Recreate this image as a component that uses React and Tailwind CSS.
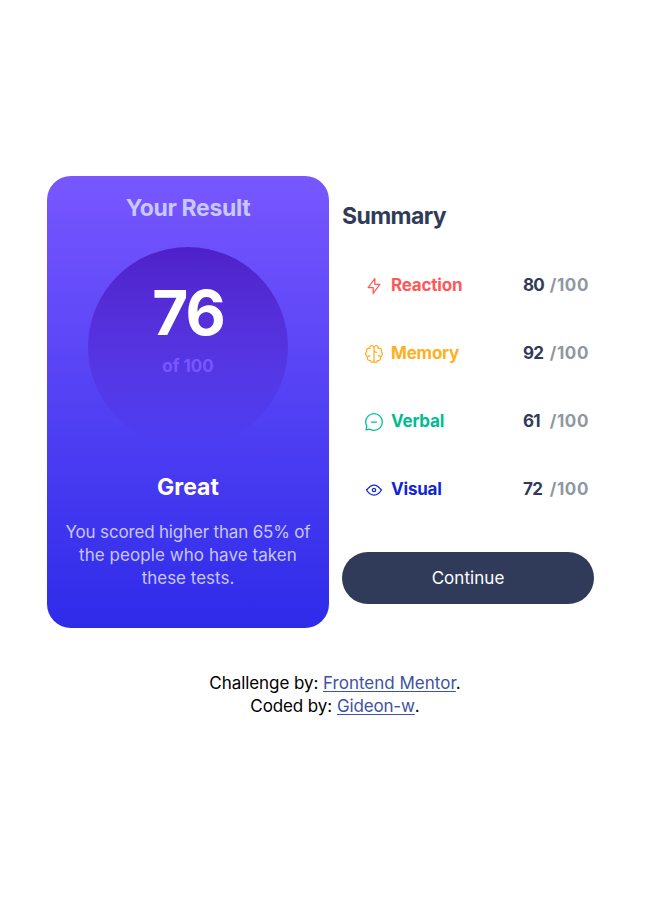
const ICONS = {
  reaction: ['M10.833 8.333V2.5l-6.666 9.167h5V17.5l6.666-9.167h-5Z'],
  memory: [
    'M5.833 11.667a2.5 2.5 0 1 0 .834 4.858',
    'M3.553 13.004a3.333 3.333 0 0 1-.728-5.53m.025-.067a2.083 2.083 0 0 1 2.983-2.824m.199.054A2.083 2.083 0 1 1 10 3.75v12.917a1.667 1.667 0 0 1-3.333 0M10 5.833a2.5 2.5 0 0 0 2.5 2.5m1.667 3.334a2.5 2.5 0 1 1-.834 4.858',
    'M16.447 13.004a3.334 3.334 0 0 0 .728-5.53m-.025-.067a2.083 2.083 0 0 0-2.983-2.824M10 3.75a2.085 2.085 0 0 1 2.538-2.033 2.084 2.084 0 0 1 1.43 2.92m-.635 12.03a1.667 1.667 0 0 1-3.333 0',
  ],
  verbal: [
    'M7.5 10h5',
    'M10 18.333A8.333 8.333 0 1 0 1.667 10c0 1.518.406 2.942 1.115 4.167l-.699 3.75 3.75-.699A8.295 8.295 0 0 0 10 18.333Z',
  ],
  visual: [
    'M10 11.667a1.667 1.667 0 1 0 0-3.334 1.667 1.667 0 0 0 0 3.334Z',
    'M17.5 10c-1.574 2.492-4.402 5-7.5 5s-5.926-2.508-7.5-5C4.416 7.632 6.66 5 10 5s5.584 2.632 7.5 5Z',
  ],
};

const ROWS = [
  { icon: 'reaction', label: 'Reaction', score: 80, color: 'text-[#ff5757]' },
  { icon: 'memory', label: 'Memory', score: 92, color: 'text-[#ffb01f]' },
  { icon: 'verbal', label: 'Verbal', score: 61, color: 'text-[#00bd91]' },
  { icon: 'visual', label: 'Visual', score: 72, color: 'text-[#1125d4]' },
];

function Icon({ name }) {
  return (
    <svg className="size-5 shrink-0" viewBox="0 0 20 20" fill="none" stroke="currentColor" strokeWidth="1.25" strokeLinecap="round" strokeLinejoin="round">
      {ICONS[name].map((d) => (
        <path key={d} d={d} />
      ))}
    </svg>
  );
}

function Result() {
  return (
    <section className="flex h-[452px] w-[282px] flex-col items-center rounded-3xl bg-linear-to-b/srgb from-[#7857ff] to-[#2e2be9] text-center text-[#c8c7ff]">
      <h1 className="mt-4 text-[23px] leading-8 font-bold tracking-[-0.35px]">Your Result</h1>
      <div className="mt-[23px] flex size-[200px] flex-col items-center rounded-full bg-linear-to-b/srgb from-[#4d21c9] to-[#2521c900]">
        <span className="mt-[25px] text-[62px] leading-[82px] font-bold tracking-[-2px] text-white">76</span>
        <span className="text-[17px] leading-6 font-bold text-[#7857ff]">of 100</span>
      </div>
      <h2 className="mt-6 text-[23px] leading-8 font-bold text-white">Great</h2>
      <p className="mt-[18px] text-[17px] leading-[23px] whitespace-nowrap">
        <span className="tracking-[-0.17px]">You scored higher than 65% of</span>
        <br />
        <span className="tracking-[0.06px]">the people who have taken</span>
        <br />
        these tests.
      </p>
    </section>
  );
}

function Summary() {
  return (
    <section className="mt-6 w-[252px] text-[#303b5a]">
      <h2 className="text-[23px] leading-8 font-bold tracking-[-0.6px]">Summary</h2>
      <ul className="mt-[42px] flex flex-col gap-11 pr-[5px] pl-[22px]">
        {ROWS.map((row) => (
          <li key={row.label} className="flex h-6 items-center text-[17px] font-bold">
            <span className={`flex items-center gap-[7px] ${row.color}`}>
              <Icon name={row.icon} />
              <span className="tracking-[-0.2px]">{row.label}</span>
            </span>
            <span className="ml-auto flex w-[66px] justify-between">
              <span className="tracking-[-0.7px]">{row.score}</span>
              <span className="tracking-[0.6px] text-[#8f98a0]">/100</span>
            </span>
          </li>
        ))}
      </ul>
      <button className="mt-[50px] h-[52px] w-full rounded-full bg-[#303b5a] pt-0.5 text-[17px] tracking-[0.05px] text-white">Continue</button>
    </section>
  );
}

export default function App() {
  return (
    <div className="h-[904px] bg-white pt-44 font-['Inter','Liberation_Sans',sans-serif]">
      <main className="ml-[47px] flex gap-[13px]">
        <Result />
        <Summary />
      </main>
      <footer className="mt-[44px] text-center text-[17px] leading-[23px] text-black">
        <p>
          <span className="tracking-[-0.07px]">Challenge by:</span> <a className="text-[#3e52a3] underline underline-offset-2">Frontend Mentor</a>.
        </p>
        <p>
          <span className="tracking-[-0.1px]">Coded by:</span> <a className="tracking-[-0.15px] text-[#3e52a3] underline underline-offset-2">Gideon-w</a>.
        </p>
      </footer>
    </div>
  );
}
